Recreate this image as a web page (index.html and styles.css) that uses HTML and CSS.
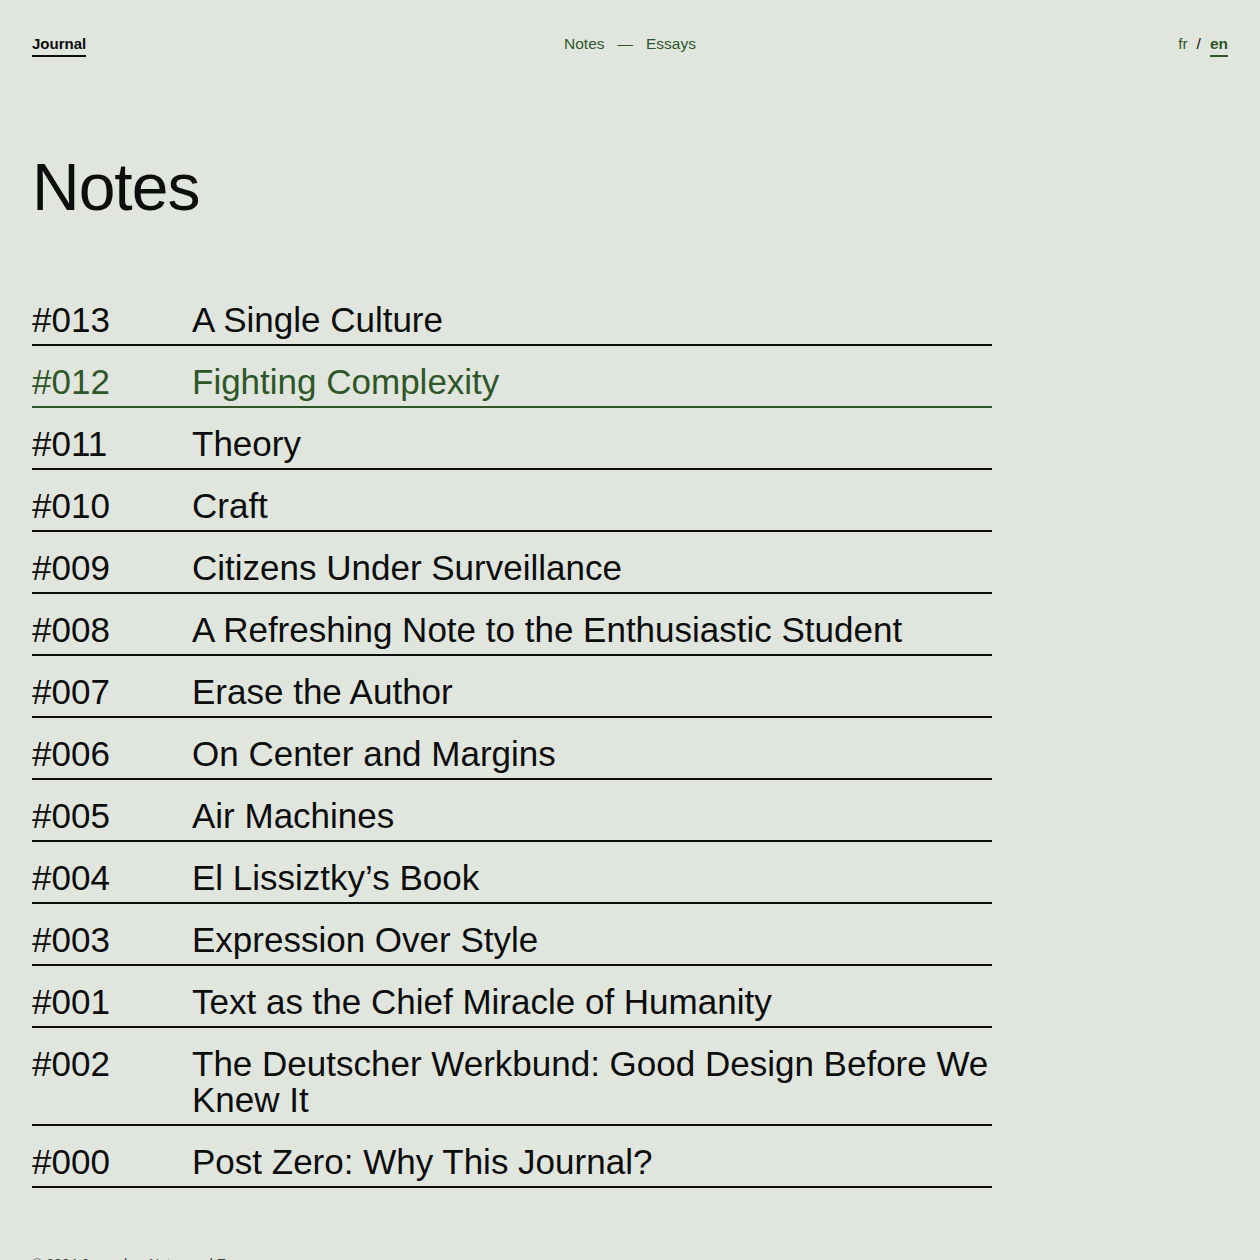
FILE: index.html
```html
<!DOCTYPE html>
<html lang="en">
<head>
  <meta charset="UTF-8" />
  <meta name="viewport" content="width=device-width, initial-scale=1.0"/>
  <title>Notes — Journal</title>
  <link rel="stylesheet" href="styles.css">
</head>
<body>

  <header class="top">
    <a class="brand" href="#">Journal</a>
    <nav class="sections">
      <a href="#">Notes</a>
      <span class="dash">—</span>
      <a href="#">Essays</a>
    </nav>
    <div class="lang">
      <a href="#">fr</a>
      <span class="slash">/</span>
      <a href="#" class="current">en</a>
    </div>
  </header>

  <h1 class="page-title">Notes</h1>

  <ul class="notes">
    <li class="note"><span class="num">#013</span><span class="name">A Single Culture</span></li>
    <li class="note active"><span class="num">#012</span><span class="name">Fighting Complexity</span></li>
    <li class="note"><span class="num">#011</span><span class="name">Theory</span></li>
    <li class="note"><span class="num">#010</span><span class="name">Craft</span></li>
    <li class="note"><span class="num">#009</span><span class="name">Citizens Under Surveillance</span></li>
    <li class="note"><span class="num">#008</span><span class="name">A Refreshing Note to the Enthusiastic Student</span></li>
    <li class="note"><span class="num">#007</span><span class="name">Erase the Author</span></li>
    <li class="note"><span class="num">#006</span><span class="name">On Center and Margins</span></li>
    <li class="note"><span class="num">#005</span><span class="name">Air Machines</span></li>
    <li class="note"><span class="num">#004</span><span class="name">El Lissiztky’s Book</span></li>
    <li class="note"><span class="num">#003</span><span class="name">Expression Over Style</span></li>
    <li class="note"><span class="num">#001</span><span class="name">Text as the Chief Miracle of Humanity</span></li>
    <li class="note"><span class="num">#002</span><span class="name">The Deutscher Werkbund: Good Design Before We Knew It</span></li>
    <li class="note"><span class="num">#000</span><span class="name">Post Zero: Why This Journal?</span></li>
  </ul>

  <footer class="foot">
    <span>© 2024 Journal — Notes and Essays</span>
  </footer>

</body>
</html>
```

FILE: styles.css
```css
:root {
  --bg: #e0e6de;
  --ink: #0d0d0d;
  --green: #2f5629;
  --font: 'Liberation Sans', Arial, sans-serif;
}

* {
  box-sizing: border-box;
  margin: 0;
  padding: 0;
}

body {
  background-color: var(--bg);
  color: var(--ink);
  font-family: var(--font);
  padding: 0 32px;
}

a {
  color: inherit;
  text-decoration: none;
}

/* header */

.top {
  display: grid;
  grid-template-columns: 1fr auto 1fr;
  align-items: start;
  padding-top: 35px;
  font-size: 15px;
  line-height: 18px;
}

.brand {
  justify-self: start;
  font-weight: 700;
  padding-bottom: 2px;
  border-bottom: 2px solid var(--ink);
}

.sections {
  display: flex;
  gap: 13px;
  color: var(--green);
  font-size: 15.5px;
}

.lang {
  justify-self: end;
  display: flex;
  gap: 9px;
  color: var(--green);
  font-size: 15.5px;
}

.lang .slash {
  color: var(--ink);
}

.lang .current {
  font-weight: 700;
  padding-bottom: 2px;
  border-bottom: 2px solid var(--green);
}

/* title */

.page-title {
  margin-top: 97px;
  font-size: 66px;
  line-height: 66px;
  font-weight: 400;
  letter-spacing: -1px;
}

/* list */

.notes {
  list-style: none;
  width: 960px;
  margin-top: 64px;
}

.note {
  display: grid;
  grid-template-columns: 160px 1fr;
  padding: 18px 0 6px;
  border-bottom: 2px solid var(--ink);
  font-size: 35px;
  line-height: 36px;
  cursor: pointer;
}

.note.active {
  color: var(--green);
  border-bottom-color: var(--green);
}

.foot {
  margin-top: 67px;
  font-size: 14px;
  line-height: 18px;
  color: #3a3f3a;
  padding-bottom: 24px;
}
```
